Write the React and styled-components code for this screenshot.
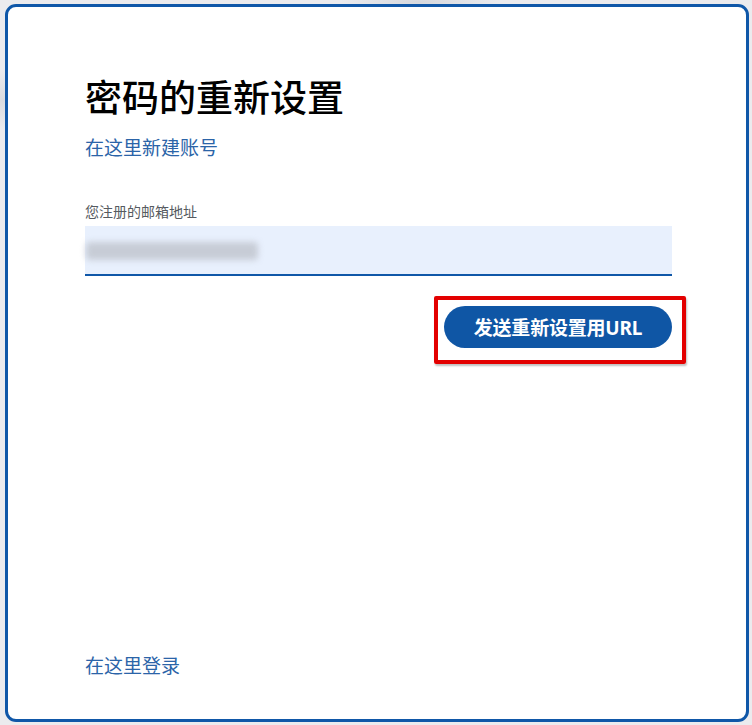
import React from "react";
import styled, { createGlobalStyle } from "styled-components";

const Global = createGlobalStyle`
  html, body { margin: 0; padding: 0; }
  body {
    background: #e9e9ec;
    font-family: "Noto Sans", "Noto Sans CJK SC", sans-serif;
    overflow: hidden;
  }
`;

const Page = styled.div`
  width: 752px;
  height: 725px;
  box-sizing: border-box;
  padding: 4px 3px 3px 5px;
  background:
    radial-gradient(ellipse 60px 30px at 2px 100px, #d9dbe0, transparent),
    radial-gradient(ellipse 80px 12px at 420px 2px, #d6d8dd, transparent),
    #ebebee;
`;

const Card = styled.div`
  box-sizing: border-box;
  height: 100%;
  background: #fff;
  border: 3px solid #0f57a8;
  border-radius: 11px;
  padding: 69px 74px 42px 77px;
  display: flex;
  flex-direction: column;
`;

const Title = styled.h1`
  margin: 0;
  font-size: 37px;
  line-height: 44px;
  font-weight: 500;
  color: #000;
`;

const Link = styled.a`
  display: block;
  color: #2b64a8;
  font-size: 19px;
  line-height: 22px;
  text-decoration: none;
  margin-top: ${(p) => p.$top || 0}px;
`;

const Label = styled.label`
  display: block;
  margin-top: 44px;
  font-size: 14px;
  line-height: 18px;
  color: #555a60;
`;

const Field = styled.div`
  margin-top: 5px;
  height: 50px;
  box-sizing: border-box;
  background: #e8f0fd;
  border-bottom: 2px solid #0f57a8;
  display: flex;
  align-items: center;
  padding-left: 1px;
`;

const Blurred = styled.div`
  width: 172px;
  height: 18px;
  margin-top: 2px;
  background: #c7ccd6;
  filter: blur(3px);
  border-radius: 4px;
`;

const Actions = styled.div`
  display: flex;
  justify-content: flex-end;
  margin-top: 20px;
  margin-right: -14px;
`;

const Highlight = styled.div`
  border: 4px solid #e30000;
  border-radius: 2px;
  padding: 6px 10px 12px 6px;
  box-shadow: 1px 2px 2px rgba(0, 0, 0, 0.25);
`;

const Button = styled.button`
  display: block;
  width: 228px;
  height: 42px;
  border: none;
  border-radius: 21px;
  background: #0f56a5;
  color: #fff;
  font-family: "Noto Sans", "Noto Sans CJK SC", sans-serif;
  font-size: 19px;
  font-weight: 700;
  letter-spacing: -0.2px;
  cursor: pointer;
`;

const Spacer = styled.div`
  flex: 1;
`;

export default function App() {
  return (
    <>
      <Global />
      <Page>
        <Card>
          <Title>密码的重新设置</Title>
          <Link href="#" $top={17}>在这里新建账号</Link>
          <Label>您注册的邮箱地址</Label>
          <Field>
            <Blurred />
          </Field>
          <Actions>
            <Highlight>
              <Button>发送重新设置用URL</Button>
            </Highlight>
          </Actions>
          <Spacer />
          <Link href="#">在这里登录</Link>
        </Card>
      </Page>
    </>
  );
}
